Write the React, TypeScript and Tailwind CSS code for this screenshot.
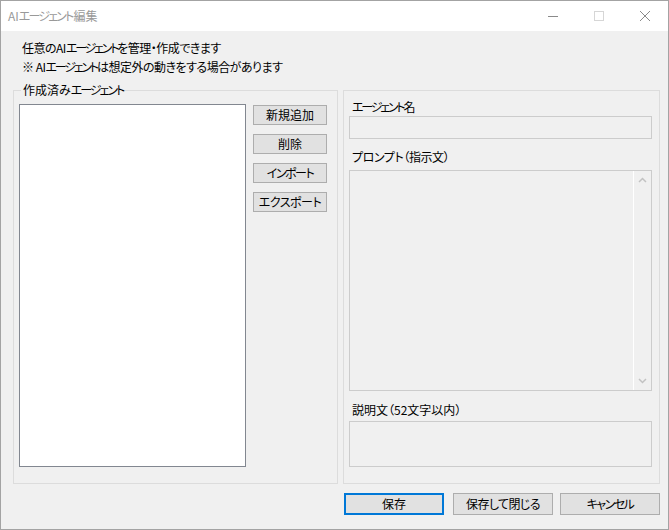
import React from "react";

const font = "[font-family:'Noto_Sans_CJK_JP','Noto_Sans',sans-serif] [font-feature-settings:'palt']";

function K({ children, t = "tracking-[-2.2px]" }: { children: React.ReactNode; t?: string }) {
  return <span className={t}>{children}</span>;
}

function Btn({ children, primary = false }: { children: React.ReactNode; primary?: boolean }) {
  return (
    <div
      className={`w-[100px] h-[22px] flex items-center justify-center bg-[#e1e1e1] text-[12px] leading-none text-black ${
        primary ? "border-2 border-[#0078d7]" : "border border-[#adadad]"
      }`}
    >
      {children}
    </div>
  );
}

function SmallBtn({ children }: { children: React.ReactNode }) {
  return (
    <div className="w-[74px] h-[20px] flex items-center justify-center bg-[#e1e1e1] border border-[#adadad] text-[12px] leading-none text-black">
      {children}
    </div>
  );
}

export default function App() {
  return (
    <div className={`w-[669px] h-[530px] border border-[#a3a3a3] bg-[#f0f0f0] flex flex-col ${font}`}>
      {/* title bar */}
      <div className="h-[30px] bg-white flex items-center shrink-0">
        <div className="pl-[7px] text-[12px] text-[#999999] leading-none flex-1">
          AI<K t="tracking-[-1.8px]">エージェント</K>
          <span className="ml-[1px]">編集</span>
        </div>
        <svg width="12" height="12" viewBox="0 0 12 12" className="mr-[34px]">
          <line x1="1" y1="6.5" x2="11" y2="6.5" stroke="#8a8a8a" strokeWidth="1" />
        </svg>
        <svg width="12" height="12" viewBox="0 0 12 12" className="mr-[34px]">
          <rect x="1.5" y="1.5" width="9" height="9" fill="none" stroke="#d6d6d6" strokeWidth="1" />
        </svg>
        <svg width="12" height="12" viewBox="0 0 12 12" className="mr-[17px]">
          <path d="M1 1 L11 11 M11 1 L1 11" stroke="#8a8a8a" strokeWidth="1" />
        </svg>
      </div>

      {/* client */}
      <div className="flex-1 flex flex-col pl-[12px] text-black">
        <div className="pt-[7px] pl-[9px] text-[12px] leading-[19px] tracking-[-0.5px]">
          <div>
            任意のAI<K>エージェント</K>を管理・作成できます
          </div>
          <div>
            ※ AI<K>エージェント</K>は想定外の動きをする場合があります
          </div>
        </div>

        <div className="mt-[14px] flex h-[394px]">
          {/* left group */}
          <div className="relative w-[325px] h-full border border-[#dcdcdc] flex pl-[5px] pt-[13px] pb-[16px]">
            <div className="absolute left-[7px] top-[-9px] px-[2px] bg-[#f0f0f0] text-[12px] leading-[16px]">
              作成済み<K t="tracking-[-2px]">エージェント</K>
            </div>
            <div className="w-[227px] h-full bg-white border border-[#828790]" />
            <div className="ml-[7px] pt-[1px] flex flex-col gap-[9px]">
              <SmallBtn>新規追加</SmallBtn>
              <SmallBtn>削除</SmallBtn>
              <SmallBtn>
                <K t="tracking-[-1.5px]">インポート</K>
              </SmallBtn>
              <SmallBtn>
                <K t="tracking-[-0.5px]">エクスポート</K>
              </SmallBtn>
            </div>
          </div>

          {/* right group */}
          <div className="ml-[5px] w-[317px] h-full border border-[#dcdcdc] flex flex-col pl-[5px] pr-[7px] pt-[8px] pb-[16px] text-[12px]">
            <div className="pl-[3px] leading-[16px] h-[17px]">
              <K>エージェント</K>名
            </div>
            <div className="h-[23px] border border-[#cccccc] bg-[#f0f0f0]" />
            <div className="mt-[10px] pl-[3px] leading-[16px] h-[17px] tracking-[-0.4px]">プロンプト（指示文）</div>
            <div className="mt-[4px] h-[221px] border border-[#cccccc] bg-[#f0f0f0] flex justify-end">
              <div className="w-[18px] h-full border-l border-[#ffffff] flex flex-col items-center justify-between py-[6px]">
                <svg width="9" height="6" viewBox="0 0 9 6">
                  <path d="M1 5 L4.5 1.5 L8 5" fill="none" stroke="#c2c2c2" strokeWidth="1.5" />
                </svg>
                <svg width="9" height="6" viewBox="0 0 9 6">
                  <path d="M1 1 L4.5 4.5 L8 1" fill="none" stroke="#c2c2c2" strokeWidth="1.5" />
                </svg>
              </div>
            </div>
            <div className="mt-[11px] pl-[3px] leading-[16px] h-[17px]">説明文（52文字以内）</div>
            <div className="mt-[2px] flex-1 border border-[#cccccc] bg-[#f0f0f0]" />
          </div>
        </div>

        <div className="mt-[9px] flex pl-[331px]">
          <Btn primary>保存</Btn>
          <div className="ml-[9px]">
            <Btn>
              <span className="tracking-[-0.6px]">保存して閉じる</span>
            </Btn>
          </div>
          <div className="ml-[7px]">
            <Btn>
              <K t="tracking-[-1.5px]">キャンセル</K>
            </Btn>
          </div>
        </div>
      </div>
    </div>
  );
}
